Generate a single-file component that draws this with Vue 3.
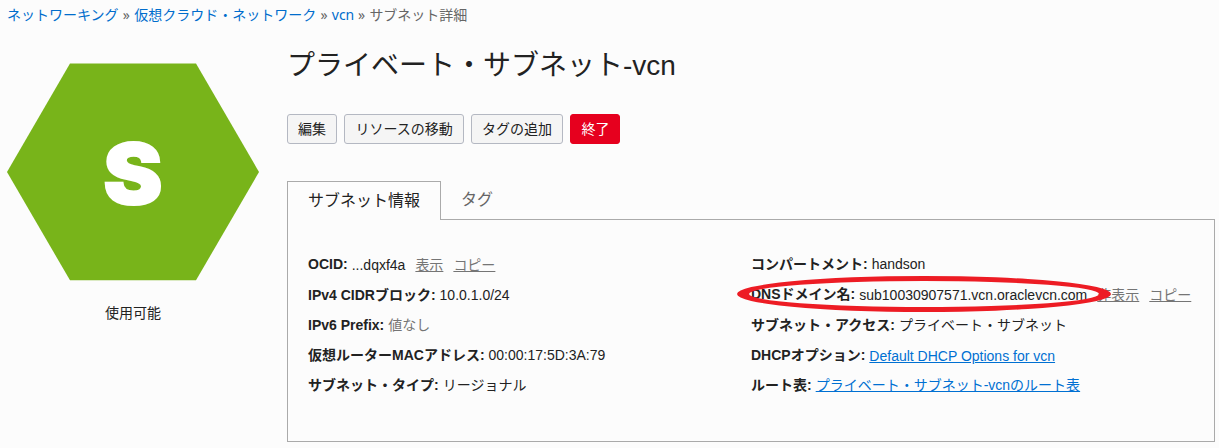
<script setup>
const left = [
  { label: 'OCID:', value: '...dqxf4a', actions: ['表示', 'コピー'], low: true },
  { label: 'IPv4 CIDRブロック:', value: '10.0.1.0/24', low: true, lowLabel: true },
  { label: 'IPv6 Prefix:', value: '値なし', muted: true },
  { label: '仮想ルーターMACアドレス:', value: '00:00:17:5D:3A:79' },
  { label: 'サブネット・タイプ:', value: 'リージョナル' },
]
const right = [
  { label: 'コンパートメント:', value: 'handson' },
  { label: 'DNSドメイン名:', value: 'sub10030907571.vcn.oraclevcn.com', actions: ['非表示', 'コピー'], low: true },
  { label: 'サブネット・アクセス:', value: 'プライベート・サブネット' },
  { label: 'DHCPオプション:', link: 'Default DHCP Options for vcn', low: true },
  { label: 'ルート表:', link: 'プライベート・サブネット-vcnのルート表' },
]
const columns = [left, right]
</script>

<template>
  <div class="page">
    <nav class="crumbs">
      <a>ネットワーキング</a><span class="sep">»</span><a>仮想クラウド・ネットワーク</a><span class="sep">»</span><a class="short">vcn</a><span class="sep">»</span><span>サブネット詳細</span>
    </nav>
    <div class="body">
      <aside class="status">
        <svg class="hex" width="252" height="218" viewBox="0 0 252 218">
          <polygon points="63,0.5 189,0.5 252,109 189,217.3 63,217.3 0,109" fill="#78b41a" />
          <text transform="translate(126 140.5) scale(1.06 1)" text-anchor="middle" class="letter">S</text>
        </svg>
        <div class="state">使用可能</div>
      </aside>
      <main class="main">
        <h1>プライベート・サブネット-vcn</h1>
        <div class="buttons">
          <button>編集</button>
          <button>リソースの移動</button>
          <button>タグの追加</button>
          <button class="danger">終了</button>
        </div>
        <div class="tabs">
          <div class="tab active">サブネット情報</div>
          <div class="tab">タグ</div>
        </div>
        <section class="panel">
          <div v-for="(col, c) in columns" :key="c" class="col">
            <div v-for="row in col" :key="row.label" class="row">
              <b :class="{ low: row.lowLabel }">{{ row.label }}</b>
              <span class="value" :class="{ muted: row.muted, low: row.low }">
                <a v-if="row.link" class="link">{{ row.link }}</a>
                <span v-else>{{ row.value }}</span>
                <a v-for="a in row.actions" :key="a" class="action">{{ a }}</a>
              </span>
            </div>
          </div>
          <svg class="mark" width="374" height="36" viewBox="0 0 374 36">
            <path fill="#ed1c24" fill-rule="evenodd" d="M0 18A187 18 0 0 1 374 18A187 18 0 0 1 0 18ZM12 18A175 13 0 0 0 362 18A175 13 0 0 0 12 18Z" />
          </svg>
        </section>
      </main>
    </div>
  </div>
</template>

<style>
body { background: #fcfcfc; }
</style>

<style scoped>
.page {
  box-sizing: border-box;
  width: 1219px;
  height: 448px;
  overflow: hidden;
  background: #fcfcfc;
  color: #222;
  font: 14px/20px "Liberation Sans", "Noto Sans CJK JP", sans-serif;
  white-space: nowrap;
}
.crumbs {
  display: flex;
  height: 30px;
  padding: 5px 0 0 7px;
  box-sizing: border-box;
  color: #666;
}
.crumbs a { color: #006dcc; }
.crumbs .short { width: 22px; font-family: "Noto Sans", sans-serif; }
.sep { width: 15.6px; text-align: center; font-family: "Noto Sans", sans-serif; }
.body { display: flex; }
.status { width: 287px; padding: 33px 0 0 7px; box-sizing: border-box; }
.hex { display: block; }
.letter { font: 900 84px Inter, sans-serif; fill: #fff; stroke: #fff; stroke-width: 2px; }
.state { width: 252px; margin-top: 22px; text-align: center; }
.main { width: 928px; }
h1 { margin: 15px 0 0; font-size: 28px; line-height: 42px; font-weight: 400; }
.buttons { display: flex; gap: 7.4px; margin-top: 27px; }
button {
  box-sizing: border-box;
  height: 30px;
  padding: 0 10px;
  border: 1px solid #b4b8c2;
  border-radius: 3px;
  background: #f5f5f5;
  color: #222;
  font: inherit;
  line-height: 28px;
}
button.danger { border-color: #e6001e; background: #e6001e; color: #fff; }
.tabs { display: flex; height: 38px; margin-top: 37px; font-size: 16px; line-height: 38px; }
.tab { padding: 0 20px; color: #666; }
.tab.active {
  box-sizing: border-box;
  z-index: 1;
  width: 154px;
  height: 39px;
  border: 1px solid #aaa;
  border-bottom: 0;
  background: #fcfcfc;
  color: #222;
  line-height: 37px;
}
.panel {
  position: relative;
  box-sizing: border-box;
  display: flex;
  width: 928px;
  height: 223px;
  padding: 29px 0 0 20px;
  border: 1px solid #aaa;
}
.col { width: 443px; }
.row { display: flex; gap: 4px; height: 30.25px; line-height: 30px; }
.value { display: flex; gap: 10px; }
.low { padding-top: 1px; }
.muted, .action { color: #757575; }
.action, .link { text-decoration: underline; }
.link { color: #0070d2; }
.mark { position: absolute; left: 449px; top: 56px; }
</style>
